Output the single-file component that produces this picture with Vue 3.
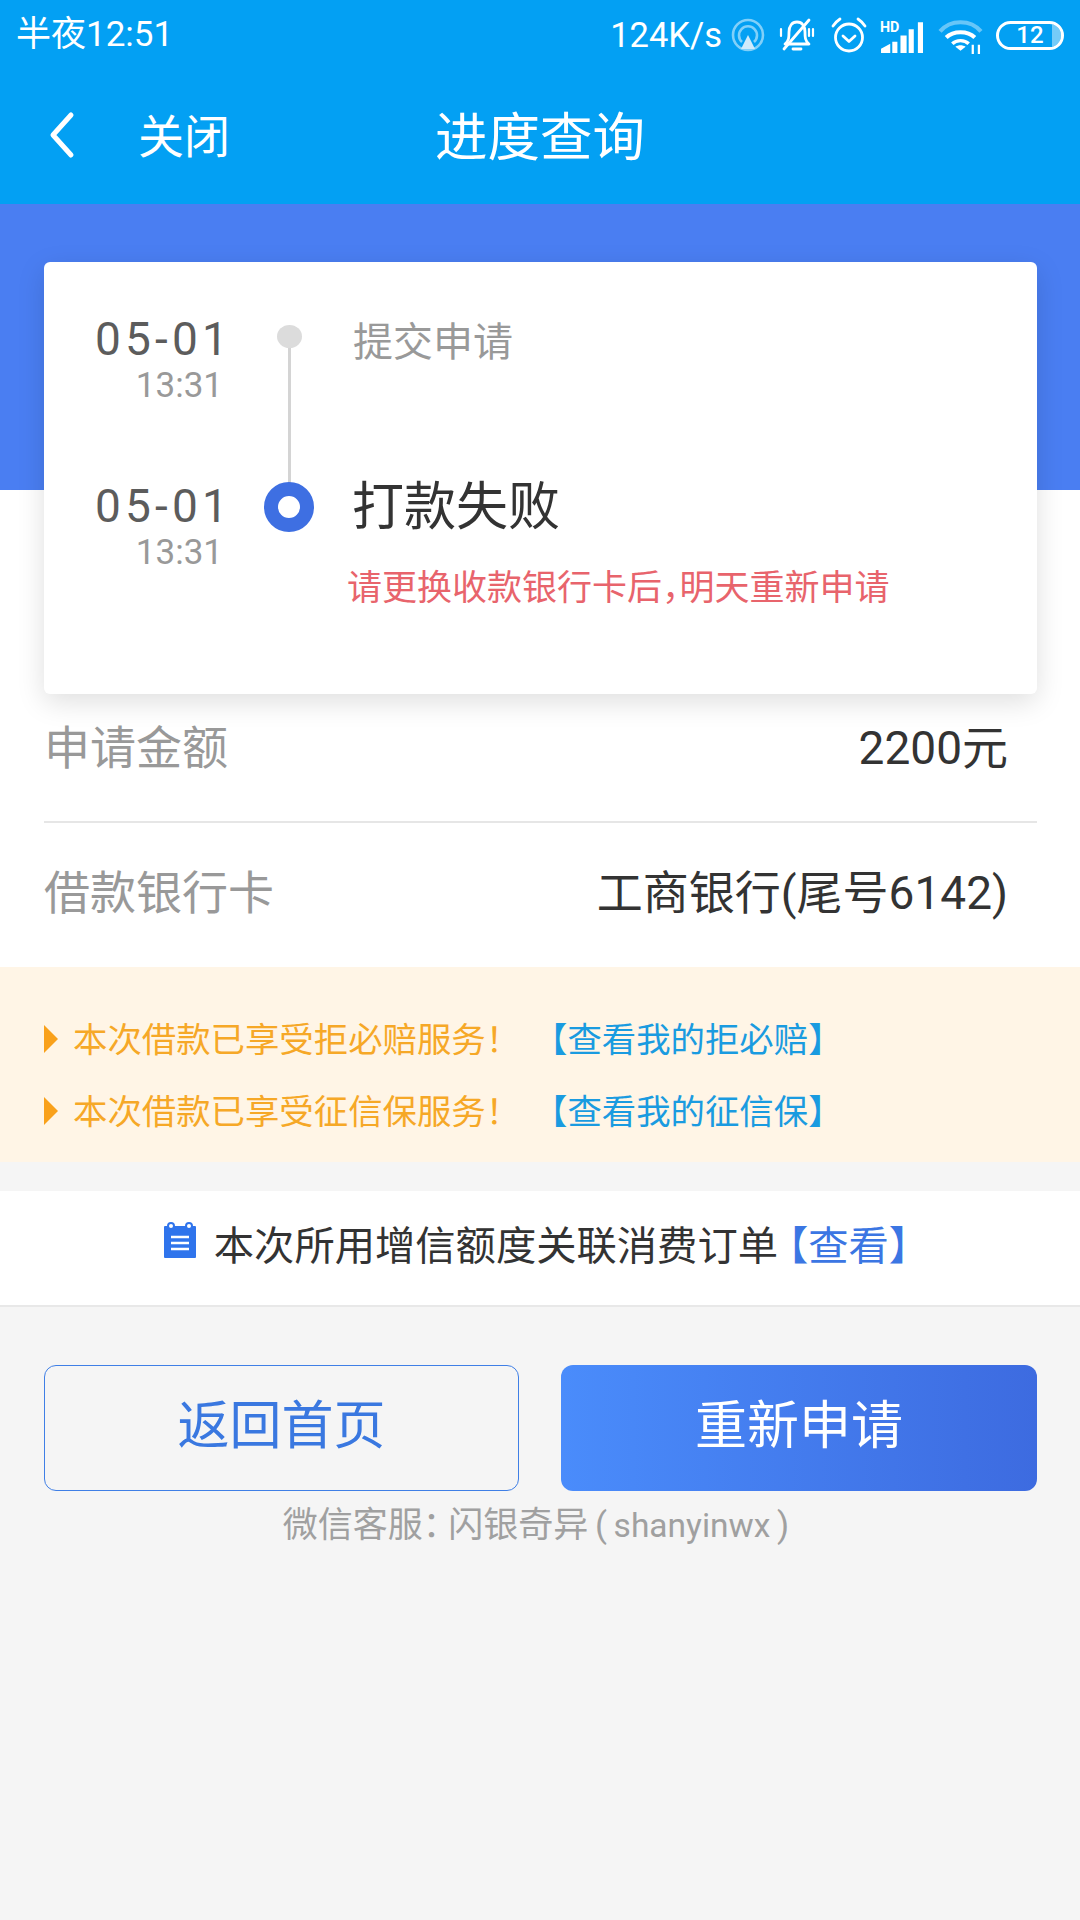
<script setup>
const offers = [
  { text: '本次借款已享受拒必赔服务！', link: '【查看我的拒必赔】' },
  { text: '本次借款已享受征信保服务！', link: '【查看我的征信保】' },
]
</script>

<template>
  <div class="page">
    <header class="top">
      <div class="status">
        <span class="clock">半夜12:51</span>
        <div class="status-right">
          <span class="speed">124K/s</span>
          <svg class="ic cast" viewBox="0 0 34 34" fill="none" stroke="#fff">
            <circle cx="17" cy="17" r="15" stroke-width="2.6" opacity=".5"/>
            <path d="M11 24 A9 9 0 1 1 23 24" stroke-width="2.6" opacity=".5"/>
            <path d="M17 17 L24 31 H10 Z" fill="#cfeafb" stroke="none"/>
          </svg>
          <svg class="ic bell" viewBox="0 0 36 36" fill="none" stroke="#fff" stroke-width="2.8" stroke-linecap="round" stroke-linejoin="round">
            <path d="M6 27 C10 24 10 20 10 15 C10 9 13 5 18 5 C23 5 26 9 26 15 C26 20 26 24 30 27 Z"/>
            <path d="M14 32 H22"/>
            <path d="M5 32 L30 3"/>
            <path d="M2 12 V19 M34 12 V19 M30 12 V19" stroke-width="2.2"/>
          </svg>
          <svg class="ic alarm" viewBox="0 0 36 36" fill="none" stroke="#fff" stroke-width="2.8" stroke-linecap="round" stroke-linejoin="round">
            <circle cx="18" cy="20.5" r="13.5"/>
            <path d="M12 19 L18 24.5 L24 19"/>
            <path d="M2 9 C4 6 6 4 9 2 M34 9 C32 6 30 4 27 2"/>
          </svg>
          <svg class="ic signal" viewBox="0 -3 42 34" fill="#fff">
            <path d="M1 31 V27 L10 22 V31 Z M12 31 V20 H17 V31 Z M20 31 V14 H26 V31 Z M28 31 V8 H33 V31 Z M37 31 V1 H42 V31 Z"/>
            <text x="0" y="11" class="hd">HD</text>
          </svg>
          <svg class="ic wifi" viewBox="0 0 44 36" fill="none" stroke="#fff" stroke-width="4">
            <path d="M2 14 C12 2 32 2 42 14" opacity=".4"/>
            <path d="M8 20 C15 13 29 13 36 20"/>
            <path d="M14 26 C18 22 26 22 30 26" stroke-width="3.4"/>
            <path d="M22 33 L17 29 C20 27 24 27 27 29 Z" fill="#fff" stroke="none"/>
            <path d="M34 27 V36 M40 27 V36" stroke-width="2.2"/>
          </svg>
          <div class="battery"><i class="charge"></i><span>12</span></div>
        </div>
      </div>
      <nav class="nav">
        <div class="nav-left">
          <svg class="back" viewBox="0 0 26 48" fill="none" stroke="#fff" stroke-width="5" stroke-linecap="round" stroke-linejoin="round">
            <path d="M22 4 L4 24 L22 44"/>
          </svg>
          <span class="lift">关闭</span>
        </div>
        <h1 class="title lift">进度查询</h1>
        <div></div>
      </nav>
    </header>

    <div class="sheet">
      <div class="banner"></div>

      <section class="card">
        <div class="step first">
          <div class="when">
            <div class="date">05-01</div>
            <div class="time">13:31</div>
          </div>
          <div class="axis">
            <i class="dot"></i>
            <i class="line"></i>
          </div>
          <div class="label">提交申请</div>
        </div>
        <div class="step">
          <div class="when">
            <div class="date">05-01</div>
            <div class="time">13:31</div>
          </div>
          <div class="axis"><i class="ring"></i></div>
          <div>
            <div class="label strong">打款失败</div>
            <div class="error">请更换收款银行卡后<span class="half">，</span>明天重新申请</div>
          </div>
        </div>
      </section>

      <section class="info">
        <div class="row divided"><span>申请金额</span><b>2200元</b></div>
        <div class="row"><span>借款银行卡</span><b>工商银行(尾号6142)</b></div>
      </section>
    </div>

    <section class="offers">
      <div v-for="o in offers" :key="o.link" class="offer">
        <i class="tri"></i>
        <span class="offer-text">{{ o.text }}</span>
        <span class="offer-link">{{ o.link }}</span>
      </div>
    </section>

    <section class="order">
      <svg class="note" viewBox="0 0 34 36">
        <path d="M2 4 H32 A1 1 0 0 1 33 5 V35 A1 1 0 0 1 32 36 H2 A1 1 0 0 1 1 35 V5 A1 1 0 0 1 2 4 Z" fill="#2f74ec"/>
        <circle cx="8" cy="4" r="3" fill="#fff" stroke="#2f74ec" stroke-width="2"/>
        <circle cx="26" cy="4" r="3" fill="#fff" stroke="#2f74ec" stroke-width="2"/>
        <path d="M8 15 H26 M8 21 H26 M8 27 H26" stroke="#fff" stroke-width="2.4"/>
      </svg>
      <span class="order-text">本次所用增信额度关联消费订单</span>
      <span class="order-link">【查看】</span>
    </section>

    <div class="actions">
      <button class="btn ghost">返回首页</button>
      <button class="btn solid">重新申请</button>
    </div>
    <p class="service">微信客服<span class="half colon">：</span>闪银奇异 ( <span class="latin">shanyinwx</span> )</p>
  </div>
</template>

<style scoped>
.page {
  width: 1080px;
  min-height: 1920px;
  background: #f5f5f5;
  font-family: Roboto, "Noto Sans CJK SC", sans-serif;
  color: #333;
  overflow: hidden;
}
.top { background: #03a0f3; color: #fff; height: 204px; }
.status {
  height: 68px;
  display: flex;
  align-items: center;
  justify-content: space-between;
  padding: 2px 16px 0;
  box-sizing: border-box;
}
.clock { font-size: 35px; line-height: 36px; }
.status-right { display: flex; align-items: center; }
.speed { font-size: 34.5px; line-height: 36px; margin-right: 9px; }
.ic { display: block; flex: none; }
.cast { width: 34px; height: 34px; margin-right: 14px; }
.bell { width: 36px; height: 36px; margin-right: 16px; }
.alarm { width: 36px; height: 36px; margin-right: 13px; }
.signal { width: 43px; height: 35px; margin-right: 15px; }
.hd { font: 700 14px Roboto, sans-serif; fill: #fff; }
.wifi { width: 45px; height: 37px; margin-right: 13px; }
.battery {
  width: 68px;
  height: 29px;
  border: 3px solid #fff;
  border-radius: 15px;
  box-sizing: border-box;
  position: relative;
  display: flex;
  align-items: center;
  justify-content: center;
  font-size: 24px;
  font-weight: 500;
  overflow: hidden;
}
.charge {
  position: absolute;
  right: 0;
  top: 0;
  bottom: 0;
  width: 9px;
  background: rgba(255,255,255,.45);
  border-radius: 0 12px 12px 0;
}
.nav {
  height: 136px;
  display: grid;
  grid-template-columns: 1fr auto 1fr;
  align-items: center;
  padding-bottom: 2px;
  box-sizing: border-box;
}
.nav-left { display: flex; align-items: center; padding-left: 49px; font-size: 46px; }
.back { width: 26px; height: 48px; margin-right: 63px; }
.lift { padding-bottom: 5px; }
.title { margin: 0; font-size: 52.5px; font-weight: 400; }

.sheet { background: #fff; }
.banner { height: 286px; background: #4a7ef2; }
.card {
  position: relative;
  margin: -228px 43px -19px 44px;
  height: 432px;
  box-sizing: border-box;
  padding-top: 54px;
  background: #fff;
  border-radius: 6px;
  box-shadow: 0 8px 28px rgba(0,0,0,.13);
}
.step { display: flex; }
.step.first { height: 167px; }
.when { width: 188px; text-align: right; flex: none; }
.date { font-size: 46px; line-height: 46px; letter-spacing: 4.2px; color: #5c5c5c; }
.time { font-size: 35px; line-height: 48px; color: #999; padding-right: 9px; }
.axis {
  width: 50px;
  margin: -1px 0 0 32px;
  flex: none;
  display: flex;
  flex-direction: column;
  align-items: center;
}
.dot { width: 25px; height: 23px; border-radius: 50%; background: #dcdcdc; margin-top: 10px; flex: none; }
.line { width: 3px; flex: 1; background: #d4d4d4; }
.ring {
  width: 50px;
  height: 50px;
  box-sizing: border-box;
  border: 14px solid #3e6fe2;
  border-radius: 50%;
  background: #fff;
}
.label { margin-left: 39px; padding-top: 2px; font-size: 40px; line-height: 50px; color: #999; }
.label.strong { margin-left: 38px; padding-top: 0; margin-top: -1px; font-size: 52px; line-height: 52px; color: #333; }
.error { margin: 37px 0 0 33px; font-size: 35px; line-height: 36px; color: #e8646c; white-space: nowrap; }
.half { font-feature-settings: "halt"; }
.colon { margin-right: 8px; }

.info { padding: 0 0 0 44px; margin-right: 43px; }
.row {
  display: flex;
  align-items: center;
  justify-content: space-between;
  box-sizing: border-box;
  font-size: 46px;
  color: #999;
  height: 144px;
  padding: 0 29px 12px 0;
}
.row b { font-weight: 400; color: #333; }
.row.divided { height: 148px; padding-bottom: 8px; border-bottom: 2px solid #e6e6e6; }

.offers { background: #fff5e6; padding: 37px 0 14px 44px; }
.offer { display: flex; align-items: center; height: 72px; padding-bottom: 7px; box-sizing: border-box; font-size: 34.4px; white-space: nowrap; }
.tri {
  width: 0;
  height: 0;
  border-left: 14px solid #f9a11b;
  border-top: 14px solid transparent;
  border-bottom: 14px solid transparent;
  margin: 5px 15px 0 0;
}
.offer-text { color: #f6a827; width: 460px; }
.offer-link { color: #1a9be0; }

.order {
  margin-top: 29px;
  height: 116px;
  box-sizing: border-box;
  background: #fff;
  border-bottom: 2px solid #e8e8e8;
  display: flex;
  align-items: center;
  justify-content: center;
  padding: 0 0 12px 12px;
  font-size: 40.3px;
  white-space: nowrap;
}
.note { width: 34px; height: 36px; margin: -4px 17px 0 0; }
.order-text { color: #333; }
.order-link { color: #3b76e3; margin-left: -10px; }

.actions { display: flex; justify-content: space-between; padding: 58px 43px 0 44px; }
.btn {
  flex: none;
  width: 475px;
  height: 126px;
  box-sizing: border-box;
  font-family: inherit;
  font-size: 52px;
  border-radius: 12px;
  padding: 0 0 13px;
}
.ghost { background: transparent; border: 1.5px solid #3f7fe6; color: #3a78e0; }
.solid { width: 476px; border: 0; color: #fff; background: linear-gradient(90deg, #4a8cfb, #3d6be0); }
.service { margin: 15px 0 0; padding-right: 8px; text-align: center; font-size: 35px; line-height: 40px; color: #a0a0a0; word-spacing: -2px; }
.latin { font-size: 33.5px; }
</style>
